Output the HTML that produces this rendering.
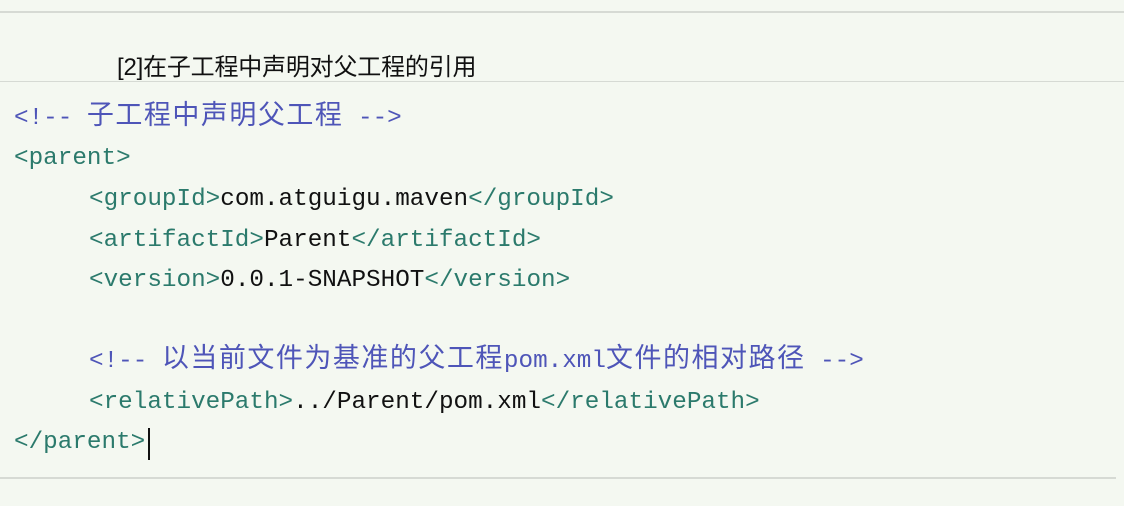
<!DOCTYPE html>
<html><head><meta charset="utf-8"><style>
html,body{margin:0;padding:0}
body{width:1124px;height:506px;background:#f4f8f1;position:relative;overflow:hidden;font-family:"Liberation Mono","Noto Sans CJK SC",monospace}
.hl{position:absolute;left:0;right:0;height:2px;background:#d6dad4}
.title{position:absolute;left:117px;top:54px;font-family:"Liberation Sans","Noto Sans CJK SC",sans-serif;font-size:24px;line-height:28px;color:#111;letter-spacing:-0.2px}
.l{position:absolute;font-size:24.3px;white-space:pre;line-height:30px;color:#111}
.t{color:#2b7a6c}.c{color:#4e55b8}
.z{font-size:27px;letter-spacing:1.5px;line-height:20px}
.cur{position:absolute;left:148px;top:428px;width:2px;height:32px;background:#111}
</style></head><body>
<div class="hl" style="top:11px"></div>
<div class="title">[2]在子工程中声明对父工程的引用</div>
<div class="hl" style="top:81px;height:1px"></div>
<div class="l c" style="left:14px;top:104px">&lt;!-- <span class="z">子工程中声明父工程</span> --&gt;</div>
<div class="l t" style="left:14px;top:144px">&lt;parent&gt;</div>
<div class="l" style="left:89px;top:185px"><span class="t">&lt;groupId&gt;</span>com.atguigu.maven<span class="t">&lt;/groupId&gt;</span></div>
<div class="l" style="left:89px;top:226px"><span class="t">&lt;artifactId&gt;</span>Parent<span class="t">&lt;/artifactId&gt;</span></div>
<div class="l" style="left:89px;top:266px"><span class="t">&lt;version&gt;</span>0.0.1-SNAPSHOT<span class="t">&lt;/version&gt;</span></div>
<div class="l c" style="left:89px;top:347px">&lt;!-- <span class="z">以当前文件为基准的父工程</span>pom.xml<span class="z">文件的相对路径</span> --&gt;</div>
<div class="l" style="left:89px;top:388px"><span class="t">&lt;relativePath&gt;</span>../Parent/pom.xml<span class="t">&lt;/relativePath&gt;</span></div>
<div class="l t" style="left:14px;top:428px">&lt;/parent&gt;</div>
<div class="cur"></div>
<div class="hl" style="top:477px;right:8px"></div>
</body></html>
